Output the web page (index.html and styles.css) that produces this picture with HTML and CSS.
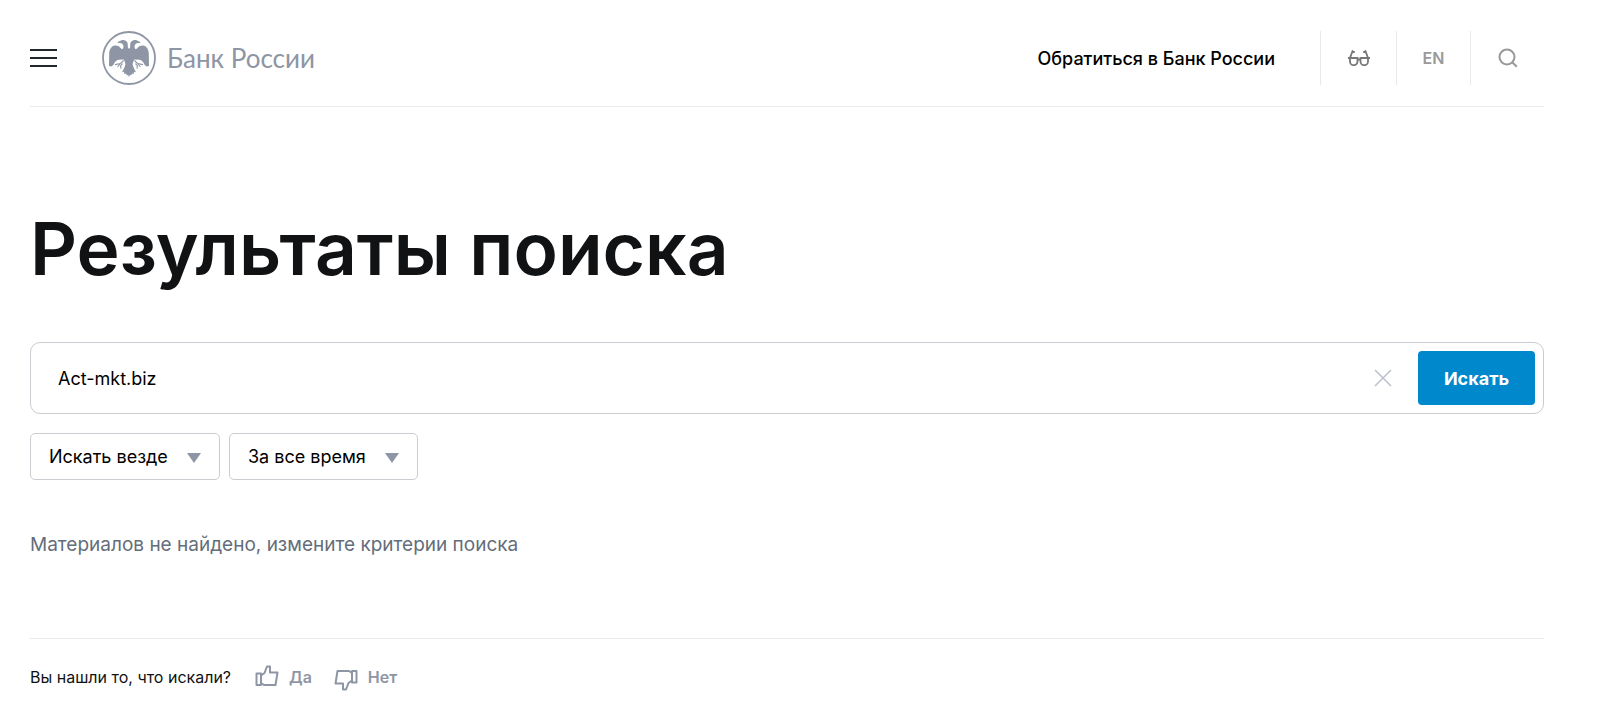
FILE: index.html
```html
<!DOCTYPE html>
<html lang="ru">

<head>
    <meta charset="UTF-8">
    <meta name="viewport" content="width=device-width, initial-scale=1.0">
    <title>Результаты поиска | Банк России</title>
    <link rel="stylesheet" href="styles.css">
</head>

<body>
    <header class="header">
        <button class="menu-button" type="button" aria-label="Меню">
            <span></span>
            <span></span>
            <span></span>
        </button>
        <a class="logo" href="#">
            <svg width="54" height="54" viewBox="0 0 54 54" aria-hidden="true">
                <circle cx="27" cy="27" r="26" fill="none" stroke="currentColor" stroke-width="1.8"/>
                <!-- left half of the eagle, mirrored for the right one -->
                <g id="half" fill="currentColor">
                    <path d="M27.200 18C25.800 17 25.600 15.500 25.800 14C26 12 24.800 9.800 22.500 9.200C20.500 8.700 19 9 18.200 10C17 10 16 10.800 15.500 12.200C17.500 11.800 19.500 12.200 20.500 13C21.500 14 21.800 16 21 17.500C20.300 18.600 19.400 18.200 18.600 17C17.200 15 15 14.300 13 14.500C9.300 14.800 7.200 18.500 7.200 23C7.200 27 7 31 7 35L9.500 35.500L11.500 33.800C12.500 31.500 13.500 29.500 16.500 28.800L21.500 28.400C22.800 30 23.200 31.800 23.400 33.400C22.600 36.200 21.500 38.500 20 41.200L22.200 40.800L22 43L24 42.400L24.800 44.600L26 43.800L27.200 46Z"/>
                    <path d="M21.500 29.500L18.500 32.500L13 33.600M18.500 32.500L15.500 36M20.600 32.600L18.600 34.600L19 37.600" fill="none" stroke="currentColor" stroke-width="1.100"/>
                </g>
                <use href="#half" transform="matrix(-1 0 0 1 54 0)"/>
            </svg>
            <span>Банк России</span>
        </a>
        <a class="contact" href="#">Обратиться в Банк России</a>
        <nav class="tools">
            <a class="tool glasses" href="#" aria-label="Версия для слабовидящих">
                <svg width="22" height="16" viewBox="0 0 22 16" fill="none" stroke="currentColor" stroke-width="1.8">
                    <path d="M0 8H9.500V11.500A3.700 3.700 0 0 1 2 11.500V8L4.500 1.200L6.800 2.600"/>
                    <path d="M22 8H12.500V11.500A3.700 3.700 0 0 0 20 11.500V8L17.500 1.200L15.200 2.600M9.500 9.500H12.500"/>
                </svg>
            </a>
            <a class="tool" href="#">EN</a>
            <a class="tool" href="#" aria-label="Поиск">
                <svg width="20" height="20" viewBox="0 0 20 20" fill="none" stroke="currentColor" stroke-width="2">
                    <circle cx="9" cy="9" r="7.500"/>
                    <path d="M14.200 14.200L18.800 18.800"/>
                </svg>
            </a>
        </nav>
    </header>

    <main class="content">
        <h1>Результаты поиска</h1>
        <form>
            <div class="search">
                <input class="search-input" type="text" aria-label="Поиск" value="Act-mkt.biz">
                <button class="search-clear" type="button" aria-label="Очистить">
                    <svg width="18" height="18" viewBox="0 0 18 18" fill="none" stroke="currentColor" stroke-width="1.6">
                        <path d="M1 1L17 17M17 1L1 17"/>
                    </svg>
                </button>
                <button class="search-submit" type="submit">Искать</button>
            </div>
            <div class="filters">
                <div class="filter">
                    <select aria-label="Где искать">
                        <option>Искать везде</option>
                    </select>
                </div>
                <div class="filter">
                    <select aria-label="Период">
                        <option>За все время</option>
                    </select>
                </div>
            </div>
        </form>
        <p class="message">Материалов не найдено, измените критерии поиска</p>
    </main>

    <footer class="feedback">
        <span>Вы нашли то, что искали?</span>
        <button class="vote" type="button">
            <svg width="24" height="22" viewBox="0 0 24 22" fill="none" stroke="currentColor" stroke-width="2" stroke-linejoin="round">
                <path d="M1.500 8.500H6V20H1.500Z"/>
                <path d="M6 10.500L9.500 8L12 1.500H15V7.500H22.500L20.500 20H9L6 18"/>
            </svg>
            Да
        </button>
        <button class="vote vote-down" type="button">
            <svg width="24" height="22" viewBox="0 0 24 22" fill="none" stroke="currentColor" stroke-width="2" stroke-linejoin="round">
                <path d="M22.500 13.500H18V2H22.500Z"/>
                <path d="M18 11.500L14.500 14L12 20.500H9V14.500H1.500L3.500 2H15L18 4"/>
            </svg>
            Нет
        </button>
    </footer>
</body>

</html>
```
FILE: styles.css
```css
* {
    box-sizing: border-box;
}

body {
    margin: 0;
    padding: 0 56px 0 30px;
    font-family: Inter, "Liberation Sans", sans-serif;
    font-size: 18px;
    color: #101214;
    background-color: #fff;
}

a {
    color: inherit;
    text-decoration: none;
}

button {
    padding: 0;
    border: 0;
    background: none;
    font: inherit;
    color: inherit;
    cursor: pointer;
}

svg {
    display: block;
    flex-shrink: 0;
}

.header {
    display: flex;
    align-items: center;
    padding: 31px 0 21px;
    border-bottom: 1px solid #e9e9ea;
}

.menu-button {
    display: flex;
    flex-direction: column;
    gap: 6px;
    width: 27px;
    margin-right: 45px;
}

.menu-button span {
    height: 2px;
    background-color: #22272b;
}

.logo {
    display: flex;
    align-items: center;
    gap: 11px;
    font-family: Lato, "Open Sans", sans-serif;
    font-size: 26px;
    line-height: 32px;
    color: #8e95a4;
}

.contact {
    margin-left: auto;
    margin-right: 45px;
    font-size: 18px;
    font-weight: 500;
    color: #000;
}

.tools {
    display: flex;
}

.tool {
    display: flex;
    align-items: center;
    justify-content: center;
    width: 74px;
    height: 54px;
    border-left: 1px solid #e9e9ea;
    font-size: 16px;
    font-weight: 600;
    color: #999;
}

.glasses {
    width: 76px;
    color: #777;
}

h1 {
    margin: 96px 0 47px;
    font-size: 73px;
    font-weight: 600;
    line-height: 92px;
}

.search {
    display: flex;
    align-items: center;
    padding: 8px;
    border: 1px solid #c9ccd1;
    border-radius: 10px;
}

.search-input {
    flex: 1;
    min-width: 0;
    padding: 0 19px;
    border: 0;
    outline: 0;
    font: inherit;
    color: #000;
}

.search-clear {
    margin-right: 26px;
    color: #bcc2cc;
}

.search-submit {
    width: 117px;
    height: 54px;
    border-radius: 4px;
    font-weight: 700;
    color: #fff;
    background-color: #0088cd;
}

.filters {
    display: flex;
    gap: 9px;
    margin-top: 19px;
}

.filter {
    position: relative;
}

.filter::after {
    content: "";
    position: absolute;
    top: 20px;
    right: 19px;
    border: 7px solid transparent;
    border-top: 10px solid #8e95a4;
    border-bottom: 0;
    pointer-events: none;
}

.filter select {
    height: 47px;
    padding: 0 51px 0 18px;
    border: 1px solid #c9ccd1;
    border-radius: 5px;
    appearance: none;
    font: inherit;
    color: #000;
    background-color: #fff;
}

.message {
    margin: 51px 0 79px;
    font-size: 19px;
    line-height: 28px;
    color: #646d7a;
}

.feedback {
    display: flex;
    align-items: center;
    padding: 24px 0 16px;
    border-top: 1px solid #e9e9ea;
    font-size: 16px;
    line-height: 28px;
}

.vote {
    display: flex;
    align-items: center;
    gap: 10px;
    margin-left: 24px;
    font-weight: 600;
    color: #8e95a4;
}

.vote svg {
    margin-bottom: 2px;
}

.vote-down {
    margin-left: 22px;
}

.vote-down svg {
    margin: 6px 0 0;
}
```
